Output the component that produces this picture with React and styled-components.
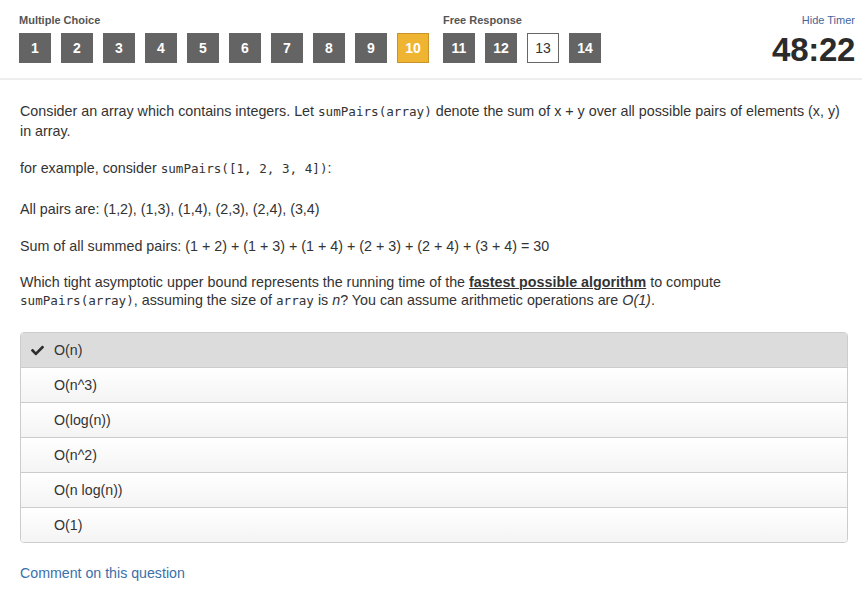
import React, { useState } from "react";
import styled, { createGlobalStyle, css } from "styled-components";
import { FaCheck } from "react-icons/fa";

const GlobalStyle = createGlobalStyle`
  html, body {
    margin: 0;
    padding: 0;
    background: #fff;
  }
  body {
    font-family: "Liberation Sans", Arial, sans-serif;
    color: #333;
  }
`;

const Header = styled.div`
  display: flex;
  justify-content: space-between;
  align-items: flex-start;
  padding: 14px 7px 13px 19px;
  border-bottom: 2px solid #eee;
`;

const Sections = styled.div`
  display: flex;
  gap: 14px;
`;

const Section = styled.div`
  display: flex;
  flex-direction: column;
`;

const SectionLabel = styled.div`
  font-size: 11px;
  font-weight: bold;
  line-height: 13px;
  color: #555;
  margin-bottom: 6px;
`;

const Boxes = styled.div`
  display: flex;
  gap: 10px;
`;

const NumBox = styled.div`
  box-sizing: border-box;
  width: 32px;
  height: 30px;
  display: flex;
  align-items: center;
  justify-content: center;
  font-size: 14px;
  font-weight: bold;
  color: #fff;
  background: #646464;
  cursor: pointer;

  ${({ $state }) =>
    $state === "current" &&
    css`
      background: #f0b433;
      border: 1px solid #c9952a;
    `}

  ${({ $state }) =>
    $state === "open" &&
    css`
      background: #fff;
      border: 1px solid #666;
      color: #333;
      font-weight: normal;
    `}
`;

const TimerBlock = styled.div`
  display: flex;
  flex-direction: column;
  align-items: flex-end;
`;

const HideTimer = styled.a`
  font-size: 11px;
  line-height: 13px;
  color: #44649c;
  margin-bottom: 6px;
  cursor: pointer;
`;

const Timer = styled.div`
  font-size: 33px;
  line-height: 30px;
  font-weight: bold;
  letter-spacing: -0.3px;
  color: #2b2b2b;
  padding-top: 2px;
`;

const Content = styled.div`
  padding: 21px 14px 20px 20px;
  font-size: 14.3px;
`;

const Para = styled.p`
  margin: 0 0 ${({ $gap }) => $gap || 18}px;
  line-height: ${({ $lh }) => $lh || 19}px;
`;

const Code = styled.code`
  font-family: "DejaVu Sans Mono", "Liberation Mono", monospace;
  font-size: 12.6px;
  line-height: 1;
`;

const Strong = styled.strong`
  text-decoration: underline;
`;

const Choices = styled.div`
  border: 1px solid #ccc;
  border-radius: 4px;
  overflow: hidden;
  margin-top: 23px;
`;

const Choice = styled.div`
  box-sizing: border-box;
  height: 35px;
  display: flex;
  align-items: center;
  padding-left: 10px;
  gap: 11px;
  background: linear-gradient(#ffffff, #f4f4f4);
  border-top: 1px solid #ccc;
  font-size: 14.2px;
  color: #333;
  cursor: pointer;

  &:first-child {
    border-top: none;
    height: 34px;
  }

  ${({ $selected }) =>
    $selected &&
    css`
      background: #dcdcdc;
    `}
`;

const CheckSlot = styled.span`
  width: 13px;
  display: flex;
  color: #2e2e2e;
  margin-right: -1px;
`;

const Comment = styled.a`
  display: block;
  margin-top: 22px;
  font-size: 14.2px;
  color: #3a6faa;
  cursor: pointer;
`;

const multiple = [1, 2, 3, 4, 5, 6, 7, 8, 9, 10];
const free = [11, 12, 13, 14];
const options = ["O(n)", "O(n^3)", "O(log(n))", "O(n^2)", "O(n log(n))", "O(1)"];

const boxState = (n) => {
  if (n === 10) return "current";
  if (n === 13) return "open";
  return "done";
};

export default function App() {
  const [selected, setSelected] = useState(0);

  return (
    <>
      <GlobalStyle />
      <Header>
        <Sections>
          <Section>
            <SectionLabel>Multiple Choice</SectionLabel>
            <Boxes>
              {multiple.map((n) => (
                <NumBox key={n} $state={boxState(n)}>
                  {n}
                </NumBox>
              ))}
            </Boxes>
          </Section>
          <Section>
            <SectionLabel>Free Response</SectionLabel>
            <Boxes>
              {free.map((n) => (
                <NumBox key={n} $state={boxState(n)}>
                  {n}
                </NumBox>
              ))}
            </Boxes>
          </Section>
        </Sections>
        <TimerBlock>
          <HideTimer>Hide Timer</HideTimer>
          <Timer>48:22</Timer>
        </TimerBlock>
      </Header>

      <Content>
        <Para $gap={18} $lh={20}>
          Consider an array which contains integers. Let <Code>sumPairs(array)</Code> denote the sum of x + y over all
          possible pairs of elements (x, y) in array.
        </Para>
        <Para $gap={22}>
          for example, consider <Code>sumPairs([1, 2, 3, 4])</Code>:
        </Para>
        <Para $gap={18}>All pairs are: (1,2), (1,3), (1,4), (2,3), (2,4), (3,4)</Para>
        <Para $gap={17}>Sum of all summed pairs: (1 + 2) + (1 + 3) + (1 + 4) + (2 + 3) + (2 + 4) + (3 + 4) = 30</Para>
        <Para $gap={0} $lh={18}>
          Which tight asymptotic upper bound represents the running time of the{" "}
          <Strong>fastest possible algorithm</Strong> to compute
          <br />
          <Code>sumPairs(array)</Code>, assuming the size of <Code>array</Code> is <em>n</em>? You can assume
          arithmetic operations are <em>O(1)</em>.
        </Para>

        <Choices>
          {options.map((o, i) => (
            <Choice key={o} $selected={selected === i} onClick={() => setSelected(i)}>
              <CheckSlot>{selected === i && <FaCheck size={13} />}</CheckSlot>
              {o}
            </Choice>
          ))}
        </Choices>

        <Comment>Comment on this question</Comment>
      </Content>
    </>
  );
}
